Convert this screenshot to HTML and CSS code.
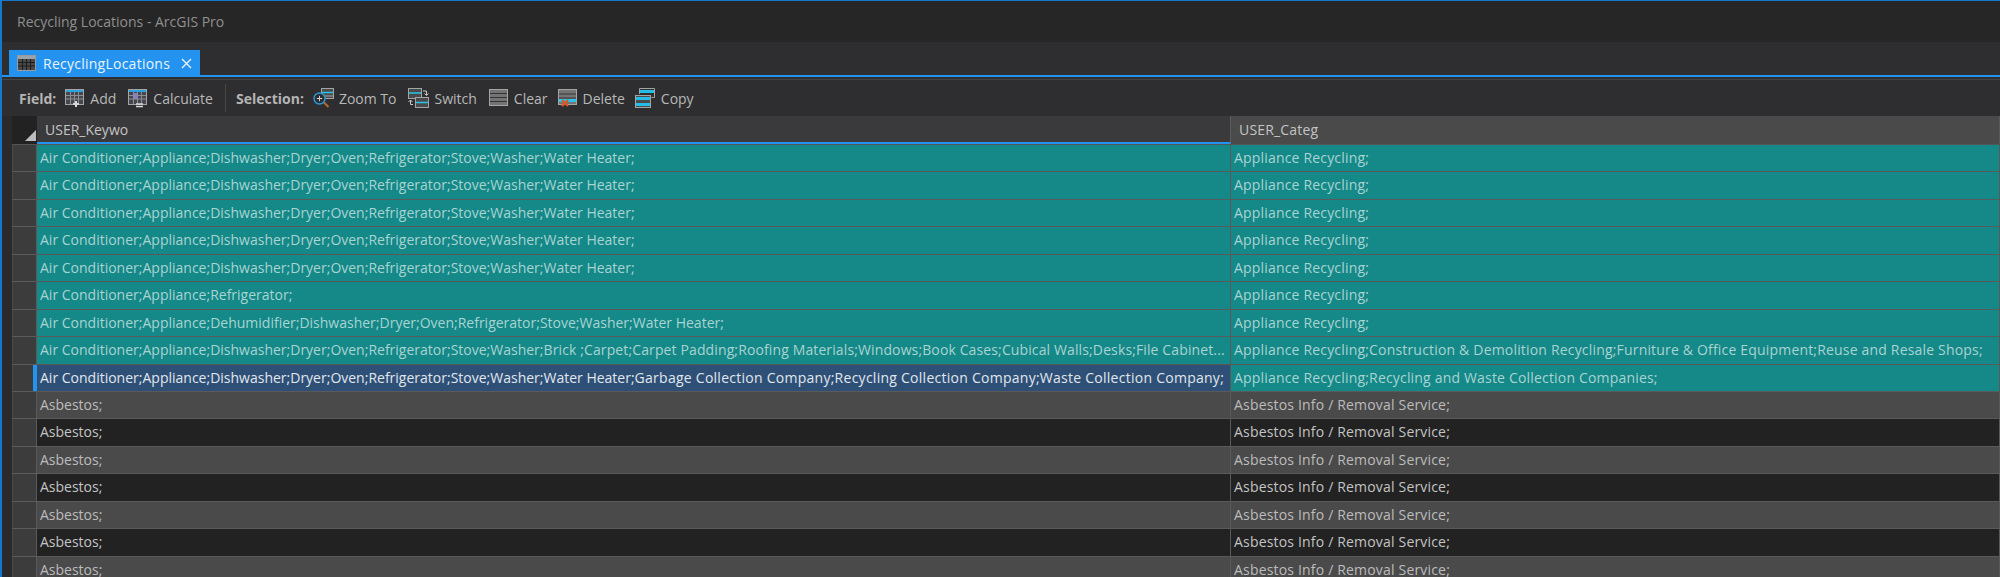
FILE: index.html
```html
<!DOCTYPE html>
<html lang="en">
<head>
    <meta charset="UTF-8">
    <title>Recycling Locations - ArcGIS Pro</title>
    <link rel="stylesheet" href="styles.css">
</head>
<body>
    <div class="window">
        <div class="titlebar">Recycling Locations - ArcGIS Pro</div>
        <div class="tabstrip">
            <div class="tab">
                <svg class="tab-icon" width="19" height="16" viewBox="0 0 19 16">
                    <rect x="0.5" y="0.5" width="18" height="15" fill="#4a4a4a" stroke="#9a9a9a"/>
                    <rect x="1" y="1" width="17" height="3" fill="#9ba3aa"/>
                    <path d="M1 7.5h17M1 11h17M5.5 4v11M9.5 4v11M13.5 4v11" stroke="#1d1d1d"/>
                </svg>
                <span class="tab-name">RecyclingLocations</span>
                <svg class="tab-close" width="11" height="11" viewBox="0 0 11 11">
                    <path d="M1 1l9 9M10 1l-9 9" stroke="#e8f3fc" stroke-width="1.4"/>
                </svg>
            </div>
        </div>
        <div class="toolbar">
            <span class="label">Field:</span>
            <span class="tool">
                <svg width="20" height="20" viewBox="0 0 20 20">
                    <rect x="0.5" y="1.5" width="18" height="15" fill="#46464e" stroke="#a4a4a4"/>
                    <rect x="1" y="2" width="17" height="2" fill="#2aa3e0"/>
                    <path d="M1 7.5h17M1 11h17M5.5 4v12M9.5 4v12M13.5 4v12" stroke="#8c8c94"/>
                    <path d="M8 16h6M11 13v6" stroke="#d8d8d8" stroke-width="2"/>
                </svg>
                Add
            </span>
            <span class="tool">
                <svg width="20" height="20" viewBox="0 0 20 20">
                    <rect x="0.5" y="1.5" width="18" height="15" fill="#46464e" stroke="#a4a4a4"/>
                    <rect x="1" y="2" width="17" height="2" fill="#2aa3e0"/>
                    <rect x="5" y="5" width="4" height="6" fill="#8a78d8"/>
                    <path d="M1 7.5h17M1 11h17M5.5 4v12M9.5 4v12M13.5 4v12" stroke="#8c8c94"/>
                    <path d="M8 16h7M8 18.5h7" stroke="#d8d8d8" stroke-width="1.4"/>
                </svg>
                Calculate
            </span>
            <span class="divider"></span>
            <span class="label">Selection:</span>
            <span class="tool">
                <svg width="21" height="20" viewBox="0 0 21 20">
                    <rect x="8.5" y="0.5" width="12" height="10" fill="#4a4a4a" stroke="#a4a4a4"/>
                    <path d="M9 4.500h11" stroke="#2ac4ea" stroke-width="1.500"/>
                    <path d="M9 8h11" stroke="#a4a4a4"/>
                    <path d="M10.500 14l5 5" stroke="#b5682c" stroke-width="2"/>
                    <circle cx="6.500" cy="10.500" r="5.500" fill="#2e2e30" stroke="#2a9bd8" stroke-width="1.400"/>
                    <path d="M3.800 10.500h5.400M6.500 7.800v5.400" stroke="#d0d0d0"/>
                </svg>
                Zoom To
            </span>
            <span class="tool">
                <svg width="21" height="20" viewBox="0 0 21 20">
                    <rect x="0.500" y="0.500" width="13" height="10" fill="#4a4a4a" stroke="#a4a4a4"/>
                    <path d="M1 5h12" stroke="#2ac4ea" stroke-width="1.500"/>
                    <rect x="7.500" y="9.500" width="13" height="10" fill="#4a4a4a" stroke="#a4a4a4"/>
                    <path d="M8 14.500h12" stroke="#2ac4ea" stroke-width="1.500"/>
                    <path d="M15 3h3.500v4M16.500 5.500l2 2 2-2M5 16.500h-2.500v-4M.5 14l2-2 2 2" fill="none" stroke="#c8c8c8"/>
                </svg>
                Switch
            </span>
            <span class="tool tight">
                <svg width="20" height="18" viewBox="0 0 20 18">
                    <rect x="0.500" y="0.500" width="18" height="16" fill="#747474" stroke="#a4a4a4"/>
                    <path d="M1 4.500h17M1 8.500h17M1 12.500h17" stroke="#333"/>
                </svg>
                Clear
            </span>
            <span class="tool tight">
                <svg width="20" height="19" viewBox="0 0 20 19">
                    <rect x="0.500" y="0.500" width="18" height="15" fill="#747474" stroke="#a4a4a4"/>
                    <path d="M1 5h17M1 9h17" stroke="#333"/>
                    <rect x="1" y="10" width="17" height="3" fill="#2ac4ea"/>
                    <path d="M4 11l6 6M10 11l-6 6" stroke="#d8582a" stroke-width="2.400"/>
                </svg>
                Delete
            </span>
            <span class="tool">
                <svg width="21" height="20" viewBox="0 0 21 20">
                    <path d="M4.500 6v-5.500h15v9h-3" fill="#2e2e30" stroke="#a4a4a4"/>
                    <rect x="5" y="2" width="14" height="3" fill="#22bde8"/>
                    <rect x="0.500" y="7.500" width="15" height="12" fill="#4a4a4a" stroke="#a4a4a4"/>
                    <rect x="1" y="9" width="14" height="3" fill="#22bde8"/>
                    <rect x="1" y="15" width="14" height="3" fill="#22bde8"/>
                </svg>
                Copy
            </span>
        </div>
        <div class="table">
            <div class="row head">
                <div class="gutter corner"><span class="corner-mark"></span></div>
                <div class="cell sorted">USER_Keywo</div>
                <div class="cell">USER_Categ</div>
            </div>
            <div class="row selected">
                <div class="gutter"></div>
                <div class="cell">Air Conditioner;Appliance;Dishwasher;Dryer;Oven;Refrigerator;Stove;Washer;Water Heater;</div>
                <div class="cell">Appliance Recycling;</div>
            </div>
            <div class="row selected">
                <div class="gutter"></div>
                <div class="cell">Air Conditioner;Appliance;Dishwasher;Dryer;Oven;Refrigerator;Stove;Washer;Water Heater;</div>
                <div class="cell">Appliance Recycling;</div>
            </div>
            <div class="row selected">
                <div class="gutter"></div>
                <div class="cell">Air Conditioner;Appliance;Dishwasher;Dryer;Oven;Refrigerator;Stove;Washer;Water Heater;</div>
                <div class="cell">Appliance Recycling;</div>
            </div>
            <div class="row selected">
                <div class="gutter"></div>
                <div class="cell">Air Conditioner;Appliance;Dishwasher;Dryer;Oven;Refrigerator;Stove;Washer;Water Heater;</div>
                <div class="cell">Appliance Recycling;</div>
            </div>
            <div class="row selected">
                <div class="gutter"></div>
                <div class="cell">Air Conditioner;Appliance;Dishwasher;Dryer;Oven;Refrigerator;Stove;Washer;Water Heater;</div>
                <div class="cell">Appliance Recycling;</div>
            </div>
            <div class="row selected">
                <div class="gutter"></div>
                <div class="cell">Air Conditioner;Appliance;Refrigerator;</div>
                <div class="cell">Appliance Recycling;</div>
            </div>
            <div class="row selected">
                <div class="gutter"></div>
                <div class="cell">Air Conditioner;Appliance;Dehumidifier;Dishwasher;Dryer;Oven;Refrigerator;Stove;Washer;Water Heater;</div>
                <div class="cell">Appliance Recycling;</div>
            </div>
            <div class="row selected">
                <div class="gutter"></div>
                <div class="cell">Air Conditioner;Appliance;Dishwasher;Dryer;Oven;Refrigerator;Stove;Washer;<span class="tail-small">Brick ;Carpet;Carpet Padding;Roofing Materials;Windows;Book Cases;Cubical Walls;Desks;File Cabinet...</span></div>
                <div class="cell">Appliance Recycling;Construction &amp; Demolition Recycling;Furniture &amp; Office Equipment;Reuse and Resale Shops;</div>
            </div>
            <div class="row selected current">
                <div class="gutter"><span class="current-mark"></span></div>
                <div class="cell">Air Conditioner;Appliance;Dishwasher;Dryer;Oven;Refrigerator;Stove;Washer;Water Heater;<span class="tail">Garbage Collection Company;Recycling Collection Company;Waste Collection Company;</span></div>
                <div class="cell">Appliance Recycling;Recycling and Waste Collection Companies;</div>
            </div>
            <div class="row light">
                <div class="gutter"></div>
                <div class="cell">Asbestos;</div>
                <div class="cell">Asbestos Info / Removal Service;</div>
            </div>
            <div class="row dark">
                <div class="gutter"></div>
                <div class="cell">Asbestos;</div>
                <div class="cell">Asbestos Info / Removal Service;</div>
            </div>
            <div class="row light">
                <div class="gutter"></div>
                <div class="cell">Asbestos;</div>
                <div class="cell">Asbestos Info / Removal Service;</div>
            </div>
            <div class="row dark">
                <div class="gutter"></div>
                <div class="cell">Asbestos;</div>
                <div class="cell">Asbestos Info / Removal Service;</div>
            </div>
            <div class="row light">
                <div class="gutter"></div>
                <div class="cell">Asbestos;</div>
                <div class="cell">Asbestos Info / Removal Service;</div>
            </div>
            <div class="row dark">
                <div class="gutter"></div>
                <div class="cell">Asbestos;</div>
                <div class="cell">Asbestos Info / Removal Service;</div>
            </div>
            <div class="row light">
                <div class="gutter"></div>
                <div class="cell">Asbestos;</div>
                <div class="cell">Asbestos Info / Removal Service;</div>
            </div>
        </div>
    </div>
</body>
</html>
```

FILE: styles.css
```css
* {
    margin: 0;
    padding: 0;
    box-sizing: border-box;
    font-family: 'Open Sans', 'Noto Sans', sans-serif;
}

html, body {
    height: 100%;
    overflow: hidden;
    background-color: #2e2e30;
}

.window {
    height: 577px;
    border-top: 1px solid #1577d0;
    border-left: 2px solid #1577d0;
    overflow: hidden;
    font-size: 14px;
    color: #c8c8c8;
}

.titlebar {
    height: 41px;
    padding-left: 15px;
    display: flex;
    align-items: center;
    background-color: #262626;
    color: #8f8f8f;
}

.tabstrip {
    height: 33px;
    padding: 8px 0 0 7px;
    background-color: #2e2e30;
}

.tab {
    width: 191px;
    height: 25px;
    display: flex;
    align-items: center;
    background-color: #2493f0;
    color: #e8f3fc;
    padding: 1px 0 0 8px;
}

.tab-icon {
    margin-right: 7px;
}

.tab-name {
    letter-spacing: 0.25px;
}

.tab-close {
    margin-left: auto;
    margin-right: 8px;
}

.toolbar {
    height: 41px;
    display: flex;
    align-items: center;
    padding: 3px 0 0 10px;
    border-top: 2px solid #2493f0;
    background: linear-gradient(#2e2e30 2px, #444 2px, #444 3px, #2e2e30 3px);
    color: #b8b8b8;
}

.label {
    font-weight: 700;
    margin: 0 9px 0 7px;
    color: #b4b4b4;
}

.tool {
    display: flex;
    align-items: center;
    gap: 5px;
    margin-right: 12px;
}

.tool.tight {
    margin-right: 10px;
}

.divider {
    width: 1px;
    height: 28px;
    background-color: #484848;
    margin-right: 3px;
}

.table {
    border-left: 10px solid #2a2a2c;
}

.row {
    display: grid;
    grid-template-columns: 25px 1194px 1fr;
    height: 27.45px;
    border-bottom: 1px solid #5a5a5a;
    line-height: 26px;
    white-space: nowrap;
}

.gutter {
    background-color: #3c3c3c;
    border-right: 1px solid #5a5a5a;
    border-left: 1px solid #4a4a4a;
    position: relative;
}

.cell {
    padding-left: 3px;
    overflow: hidden;
    border-right: 1px solid #5a5a5a;
}

.cell:last-child {
    letter-spacing: 0.18px;
}

.tail {
    letter-spacing: 0.26px;
}

.tail-small {
    letter-spacing: 0.12px;
}

.head {
    height: 29px;
    line-height: 28px;
    background-color: #4a4a4a;
    border-bottom: 1px solid #555;
    color: #c4c4c4;
}

.head .cell {
    padding-left: 8px;
}

.head .sorted {
    background-color: #3a3a3c;
    border-bottom: 2px solid #2493f0;
}

.corner {
    background-color: #222;
    border: 0;
}

.corner-mark {
    position: absolute;
    right: 1px;
    bottom: 3px;
    border-left: 11px solid transparent;
    border-bottom: 11px solid #bdbdbd;
}

.selected .cell {
    background-color: #158888;
    color: #a8d4d2;
}

.selected.current .cell:nth-child(2) {
    background-color: #2f5076;
    color: #e0e7ee;
}

.current-mark {
    position: absolute;
    right: -1px;
    top: 0;
    bottom: 0;
    width: 4px;
    background-color: #2493f0;
}

.light .cell {
    background-color: #4a4a4a;
    color: #bcbcbc;
}

.dark .cell {
    background-color: #222222;
    color: #c4c4c4;
}
```
